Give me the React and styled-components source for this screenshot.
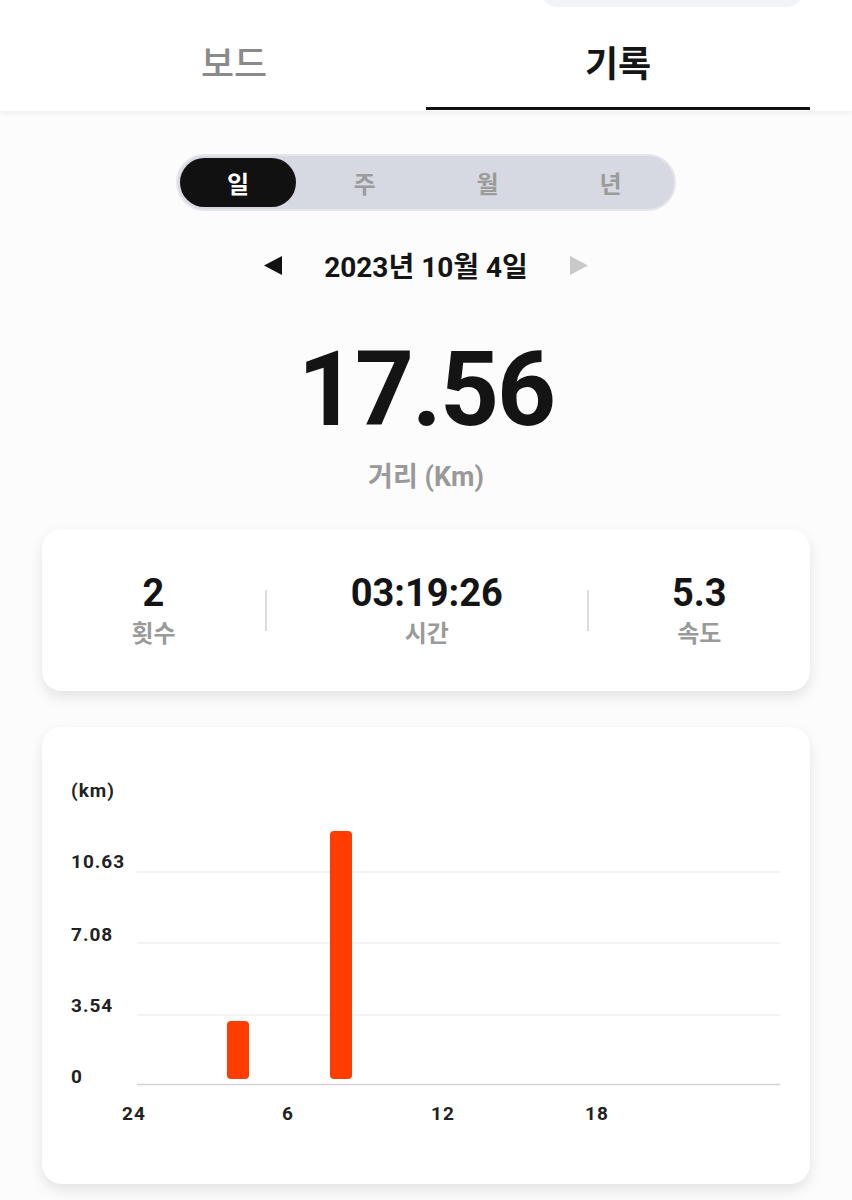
import styled, { createGlobalStyle } from "styled-components";

const GlobalStyle = createGlobalStyle`
  body {
    margin: 0;
    background: #fcfcfc;
    font-family: Roboto, "Noto Sans CJK KR", sans-serif;
    color: #111;
  }
`;

const periods = ["일", "주", "월", "년"];

const stats = [
  { value: "2", label: "횟수" },
  { value: "03:19:26", label: "시간" },
  { value: "5.3", label: "속도" },
];

// 차트 좌표 (카드 기준 px)
const gridLines = [
  { label: "10.63", y: 145, textY: 141 },
  { label: "7.08", y: 216, textY: 214 },
  { label: "3.54", y: 288, textY: 285 },
];

const bars = [
  { x: 185, top: 294 },
  { x: 288, top: 104 },
];

const xLabels = [
  { label: "24", x: 92 },
  { label: "6", x: 246 },
  { label: "12", x: 401 },
  { label: "18", x: 555 },
];

const App = () => {
  return (
    <Page>
      <GlobalStyle />
      <Header>
        <SearchPill />
        <TabBar>
          <Tab>보드</Tab>
          <Tab $active>기록</Tab>
        </TabBar>
      </Header>

      <Segment>
        {periods.map((p, i) => (
          <SegmentItem key={p} $active={i === 0}>
            {p}
          </SegmentItem>
        ))}
      </Segment>

      <DateRow>
        <Arrow viewBox="0 0 18 19">
          <polygon points="18,0 18,19 0,9.5" fill="#111" />
        </Arrow>
        <DateText>2023년 10월 4일</DateText>
        <Arrow viewBox="0 0 18 19">
          <polygon points="0,0 0,19 18,9.5" fill="#c9c9c9" />
        </Arrow>
      </DateRow>

      <BigNumber>17.56</BigNumber>
      <BigLabel>거리 (Km)</BigLabel>

      <StatsCard>
        {stats.map((s, i) => (
          <StatGroup key={s.label}>
            {i > 0 && <Divider />}
            <Stat>
              <StatValue>{s.value}</StatValue>
              <StatLabel>{s.label}</StatLabel>
            </Stat>
          </StatGroup>
        ))}
      </StatsCard>

      <ChartCard>
        <svg width="768" height="457" viewBox="0 0 768 457">
          <text x="29" y="70" className="axis">(km)</text>
          {gridLines.map((g) => (
            <g key={g.label}>
              <text x="29" y={g.textY} className="axis">{g.label}</text>
              <line x1="95" x2="738" y1={g.y} y2={g.y} stroke="#efefef" strokeWidth="1.5" />
            </g>
          ))}
          <text x="29" y="356" className="axis">0</text>
          {bars.map((b) => (
            <rect key={b.x} x={b.x} y={b.top} width="22" height={352 - b.top} rx="4" fill="#ff3d00" />
          ))}
          <line x1="95" x2="738" y1="357.5" y2="357.5" stroke="#d2d2d2" strokeWidth="1.5" />
          {xLabels.map((l) => (
            <text key={l.label} x={l.x} y="393" textAnchor="middle" className="axis">
              {l.label}
            </text>
          ))}
        </svg>
      </ChartCard>
    </Page>
  );
};

const Page = styled.div`
  display: flex;
  flex-direction: column;
  align-items: center;
  min-height: 1200px;
  overflow: hidden;
`;

const Header = styled.header`
  align-self: stretch;
  display: flex;
  flex-direction: column;
  background: #fff;
  padding-bottom: 1px;
  box-shadow: 0 3px 5px rgba(0, 0, 0, 0.05);
`;

const SearchPill = styled.div`
  align-self: flex-end;
  width: 264px;
  height: 40px;
  margin: -33px 48px 0 0;
  border-radius: 18px;
  background: #f2f3f5;
`;

const TabBar = styled.nav`
  display: grid;
  grid-template-columns: 1fr 1fr;
  padding: 0 42px;
`;

const Tab = styled.div`
  box-sizing: border-box;
  height: 103px;
  padding-top: 36px;
  text-align: center;
  font-size: 36px;
  line-height: 44px;
  font-weight: ${({ $active }) => ($active ? 700 : 500)};
  color: ${({ $active }) => ($active ? "#151515" : "#8a8a8a")};
  border-bottom: 3px solid ${({ $active }) => ($active ? "#111" : "transparent")};
`;

const Segment = styled.div`
  box-sizing: border-box;
  display: grid;
  grid-template-columns: repeat(4, 1fr);
  width: 500px;
  height: 57px;
  margin-top: 43px;
  padding: 2px;
  border: 2px solid #e4e6eb;
  border-radius: 29px;
  background: #d6d9e1;
`;

const SegmentItem = styled.div`
  display: flex;
  align-items: center;
  justify-content: center;
  margin-right: ${({ $active }) => ($active ? "7px" : "0")};
  border-radius: 25px;
  font-size: 24px;
  font-weight: 700;
  background: ${({ $active }) => ($active ? "#111" : "transparent")};
  color: ${({ $active }) => ($active ? "#fff" : "#9b9b9b")};
`;

const DateRow = styled.div`
  display: flex;
  align-items: center;
  gap: 42px;
  height: 40px;
  margin-top: 34px;
`;

const Arrow = styled.svg`
  width: 18px;
  height: 19px;
`;

const DateText = styled.div`
  font-size: 28px;
  font-weight: 700;
  color: #151515;
`;

const BigNumber = styled.div`
  margin-top: 45px;
  font-size: 103px;
  line-height: 120px;
  font-weight: 700;
  letter-spacing: -2px;
  color: #141414;
`;

const BigLabel = styled.div`
  margin-top: 10px;
  font-size: 27px;
  line-height: 34px;
  font-weight: 700;
  color: #999;
`;

const Card = styled.section`
  box-sizing: border-box;
  width: 768px;
  background: #fff;
  border-radius: 20px;
  box-shadow: 0 6px 14px rgba(0, 0, 0, 0.1);
`;

const StatsCard = styled(Card)`
  display: grid;
  grid-template-columns: 223px 1fr 223px;
  height: 162px;
  margin-top: 35px;
`;

const StatGroup = styled.div`
  display: flex;
  align-items: center;
`;

const Divider = styled.div`
  width: 1.5px;
  height: 41px;
  background: #dcdcdc;
`;

const Stat = styled.div`
  flex: 1;
  display: flex;
  flex-direction: column;
  align-items: center;
`;

const StatValue = styled.div`
  font-size: 38px;
  line-height: 44px;
  font-weight: 700;
  color: #141414;
`;

const StatLabel = styled.div`
  margin-top: 4px;
  font-size: 24px;
  line-height: 30px;
  font-weight: 700;
  color: #9a9a9a;
`;

const ChartCard = styled(Card)`
  height: 457px;
  margin-top: 36px;

  svg {
    display: block;
  }

  .axis {
    font-family: Roboto, sans-serif;
    font-size: 19px;
    font-weight: 700;
    fill: #222;
    letter-spacing: 1px;
  }
`;

export default App;
